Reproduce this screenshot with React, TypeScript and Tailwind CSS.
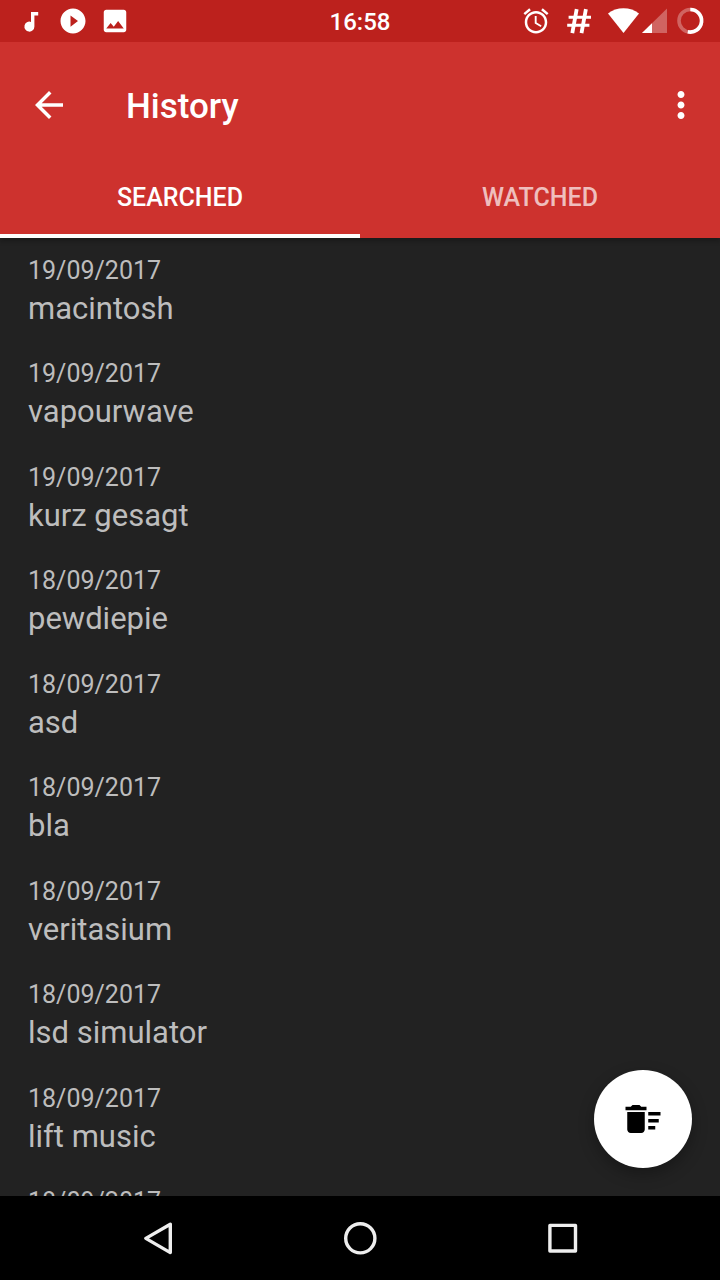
import React from "react";

type HistoryEntry = { date: string; term: string };

const entries: HistoryEntry[] = [
  { date: "19/09/2017", term: "macintosh" },
  { date: "19/09/2017", term: "vapourwave" },
  { date: "19/09/2017", term: "kurz gesagt" },
  { date: "18/09/2017", term: "pewdiepie" },
  { date: "18/09/2017", term: "asd" },
  { date: "18/09/2017", term: "bla" },
  { date: "18/09/2017", term: "veritasium" },
  { date: "18/09/2017", term: "lsd simulator" },
  { date: "18/09/2017", term: "lift music" },
  { date: "18/09/2017", term: "" },
];

function StatusBar() {
  return (
    <div className="grid h-[42px] shrink-0 grid-cols-[1fr_auto_1fr] items-center bg-[#bc211d] px-4">
      <div className="flex items-center gap-3">
        <svg width="30" height="30" viewBox="0 0 30 30" fill="currentColor" aria-hidden="true">
          <path d="M15 6h7.2v3.4h-3.8v11.2a5 5 0 1 1-3.4-4.7z" />
        </svg>
        <svg width="30" height="30" viewBox="0 0 24 24" fill="currentColor" aria-hidden="true">
          <path d="M12 2C6.48 2 2 6.48 2 12s4.48 10 10 10 10-4.48 10-10S17.52 2 12 2zm-2 14.5v-9l6 4.5-6 4.5z" />
        </svg>
        <svg width="30" height="30" viewBox="0 0 24 24" fill="currentColor" aria-hidden="true">
          <path d="M21 19V5c0-1.1-.9-2-2-2H5c-1.1 0-2 .9-2 2v14c0 1.1.9 2 2 2h14c1.1 0 2-.9 2-2zM8.5 13.5l2.5 3.01L14.5 12l4.5 6H5l3.5-4.5z" />
        </svg>
      </div>
      <time className="pt-0.5 text-2xl font-medium">16:58</time>
      <div className="flex items-center justify-end gap-2">
        <div className="mr-1 flex items-center gap-[13px]">
          <svg width="30" height="30" viewBox="0 0 24 24" fill="currentColor" aria-hidden="true">
            <path d="M22 5.72l-4.6-3.86-1.29 1.53 4.6 3.86L22 5.72zM7.88 3.39L6.6 1.86 2 5.71l1.29 1.53 4.59-3.85zM12.5 8H11v6l4.75 2.85.75-1.23-4-2.37V8zM12 4c-4.97 0-9 4.03-9 9s4.02 9 9 9c4.97 0 9-4.03 9-9s-4.03-9-9-9zm0 16c-3.87 0-7-3.13-7-7s3.13-7 7-7 7 3.13 7 7-3.13 7-7 7z" />
          </svg>
          <svg
            width="30"
            height="30"
            viewBox="0 0 30 30"
            fill="none"
            stroke="currentColor"
            aria-hidden="true"
          >
            <path strokeWidth="3.8" d="M12.7 3.2L8.3 27.2M21.9 3.2L17.5 27.2" />
            <path strokeWidth="3" d="M4.6 11.2H27M3.2 19.2H25.4" />
          </svg>
        </div>
        <div className="flex items-center">
          <svg width="34" height="30" viewBox="0 0 34 30" fill="currentColor" aria-hidden="true">
            <path d="M17.5 27L2 7.4C6.3 4 11.7 2.2 17.5 2.2S28.7 4 33 7.4z" />
          </svg>
          <svg width="28" height="30" viewBox="0 0 28 30" fill="currentColor" aria-hidden="true">
            <path opacity="0.3" d="M2 27L27 2.5V27z" />
            <path d="M2 27L12 17.2V27z" />
          </svg>
        </div>
        <svg
          width="28"
          height="30"
          viewBox="0 0 28 30"
          fill="none"
          stroke="currentColor"
          strokeWidth="3.6"
          aria-hidden="true"
        >
          <circle cx="14.3" cy="14.8" r="11.3" opacity="0.3" />
          <path d="M14.3 3.5a11.3 11.3 0 1 1-2.5 22.32" />
        </svg>
      </div>
    </div>
  );
}

function Header() {
  return (
    <header className="relative z-10 shrink-0 bg-[#cd322e] shadow-[0_4px_4px_rgba(0,0,0,0.2)]">
      <div className="flex h-28 items-center pt-[14px] pr-[18px] pl-7">
        <button type="button" aria-label="Back">
          <svg width="42" height="42" viewBox="0 0 24 24" fill="currentColor" aria-hidden="true">
            <path d="M20 11H7.83l5.59-5.59L12 4l-8 8 8 8 1.41-1.41L7.83 13H20v-2z" />
          </svg>
        </button>
        <h1 className="ml-14 flex-1 pt-1 text-[35px] leading-[42px] font-medium">History</h1>
        <button type="button" aria-label="More options">
          <svg width="42" height="42" viewBox="0 0 24 24" fill="currentColor" aria-hidden="true">
            <path d="M12 8c1.1 0 2-.9 2-2s-.9-2-2-2-2 .9-2 2 .9 2 2 2zm0 2c-1.1 0-2 .9-2 2s.9 2 2 2 2-.9 2-2-.9-2-2-2zm0 6c-1.1 0-2 .9-2 2s.9 2 2 2 2-.9 2-2-.9-2-2-2z" />
          </svg>
        </button>
      </div>
      <div role="tablist" className="grid h-[84px] grid-cols-2 text-[25px] font-medium">
        <button
          type="button"
          role="tab"
          aria-selected="true"
          className="border-b-4 border-white pt-2"
        >
          SEARCHED
        </button>
        <button
          type="button"
          role="tab"
          aria-selected="false"
          className="border-b-4 border-transparent pt-2 text-white/70"
        >
          WATCHED
        </button>
      </div>
    </header>
  );
}

function HistoryList() {
  return (
    <ul className="text-[#bdbdbd]">
      {entries.map((entry, index) => (
        <li key={index} className="px-7 pt-[15px] pb-3 even:pb-[13px]">
          <p className="text-[25px] leading-[36px]">{entry.date}</p>
          <p className="text-[31px] leading-[40px]">{entry.term}</p>
        </li>
      ))}
    </ul>
  );
}

function NavigationBar() {
  return (
    <nav
      aria-label="System"
      className="grid h-[84px] shrink-0 grid-cols-3 bg-black px-[57px] text-[#eeeeee]"
    >
      <button type="button" aria-label="Back" className="flex items-center justify-center">
        <svg
          width="42"
          height="42"
          viewBox="0 0 42 42"
          fill="none"
          stroke="currentColor"
          strokeWidth="3.4"
          strokeLinejoin="round"
          aria-hidden="true"
        >
          <path d="M33.3 7.2V35.6L8.8 21.4z" />
        </svg>
      </button>
      <button type="button" aria-label="Home" className="flex items-center justify-center">
        <svg
          width="42"
          height="42"
          viewBox="0 0 42 42"
          fill="none"
          stroke="currentColor"
          strokeWidth="3.4"
          aria-hidden="true"
        >
          <circle cx="21.3" cy="21.3" r="14.6" />
        </svg>
      </button>
      <button type="button" aria-label="Recent apps" className="flex items-center justify-center">
        <svg
          width="42"
          height="42"
          viewBox="0 0 42 42"
          fill="none"
          stroke="currentColor"
          strokeWidth="3.4"
          strokeLinejoin="round"
          aria-hidden="true"
        >
          <rect x="8.9" y="8.4" width="25.6" height="25.6" />
        </svg>
      </button>
    </nav>
  );
}

export default function App() {
  return (
    <div className="flex h-screen flex-col bg-[#222222] font-[Roboto,sans-serif] text-white">
      <StatusBar />
      <Header />
      <main className="relative min-h-0 flex-1 overflow-hidden">
        <HistoryList />
        <button
          type="button"
          aria-label="Clear history"
          className="absolute right-7 bottom-7 flex size-[98px] items-center justify-center rounded-full bg-white text-black shadow-[0_6px_16px_rgba(0,0,0,0.3)]"
        >
          <svg width="42" height="42" viewBox="0 0 24 24" fill="currentColor" aria-hidden="true">
            <path d="M15 16h4v2h-4zm0-8h7v2h-7zm0 4h6v2h-6zM3 18c0 1.1.9 2 2 2h6c1.1 0 2-.9 2-2V8H3v10zM14 5h-3l-1-1H6L5 5H2v2h12z" />
          </svg>
        </button>
      </main>
      <NavigationBar />
    </div>
  );
}
